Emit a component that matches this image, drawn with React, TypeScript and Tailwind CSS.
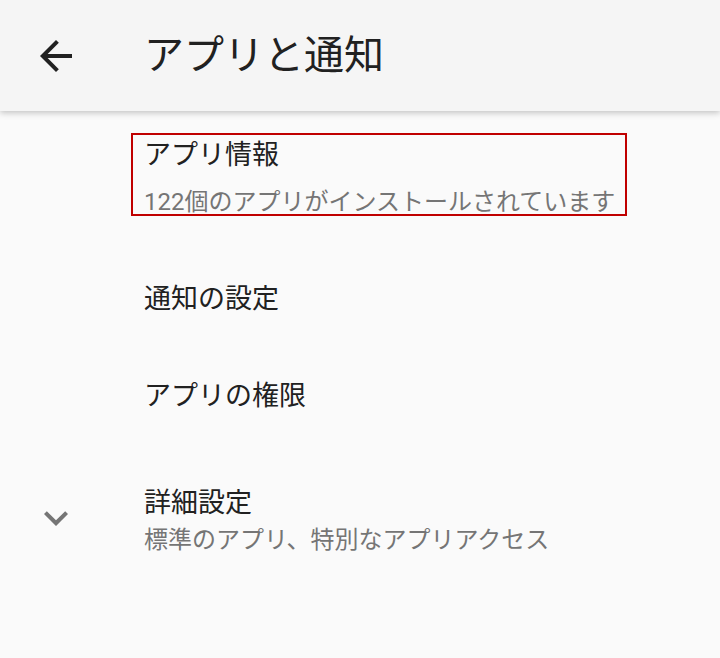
import React from "react";

const font = { fontFamily: 'Roboto, "Noto Sans CJK JP", sans-serif' };

function BackArrow() {
  return (
    <svg viewBox="0 0 24 24" className="w-12 h-12" fill="#212121">
      <path d="M20 11H7.83l5.59-5.59L12 4l-8 8 8 8 1.41-1.41L7.83 13H20v-2z" />
    </svg>
  );
}

function ExpandMore() {
  return (
    <svg viewBox="0 0 24 24" className="w-12 h-12" fill="#757575">
      <path d="M16.59 8.59L12 13.17 7.41 8.59 6 10l6 6 6-6z" />
    </svg>
  );
}

export default function App() {
  return (
    <div className="w-[720px] h-[658px] bg-[#fafafa] overflow-hidden" style={font}>
      {/* toolbar */}
      <div className="relative z-10 h-[111px] bg-[#f5f5f5] flex items-center shadow-[0_2px_6px_rgba(0,0,0,0.22)]">
        <div className="ml-[32px] w-12 h-12 flex items-center justify-center">
          <BackArrow />
        </div>
        <div className="ml-[64px] text-[40px] leading-[48px] text-[#212121]">アプリと通知</div>
      </div>

      {/* list */}
      <div className="pt-[22px]">
        <div className="ml-[131px] w-[496px] h-[83px] border-2 border-[#c00000] pl-[11px] flex flex-col">
          <div className="text-[27px] leading-[40px] text-[#212121]">アプリ情報</div>
          <div className="mt-[13px] text-[24px] leading-[28px] text-[#757575] whitespace-nowrap">
            122個のアプリがインストールされています
          </div>
        </div>

        <div className="mt-[34px] h-[97px] pl-[144px] flex items-center">
          <div className="text-[27px] leading-[40px] text-[#212121]">通知の設定</div>
        </div>

        <div className="h-[97px] pl-[144px] flex items-center">
          <div className="text-[27px] leading-[40px] text-[#212121]">アプリの権限</div>
        </div>

        <div className="h-[148px] flex items-center">
          <div className="w-[144px] pl-[32px] flex items-center">
            <ExpandMore />
          </div>
          <div className="flex flex-col pt-[7px]">
            <div className="text-[27px] leading-[37px] text-[#212121]">詳細設定</div>
            <div className="text-[24px] leading-[37px] text-[#757575]">標準のアプリ、特別なアプリアクセス</div>
          </div>
        </div>
      </div>
    </div>
  );
}
